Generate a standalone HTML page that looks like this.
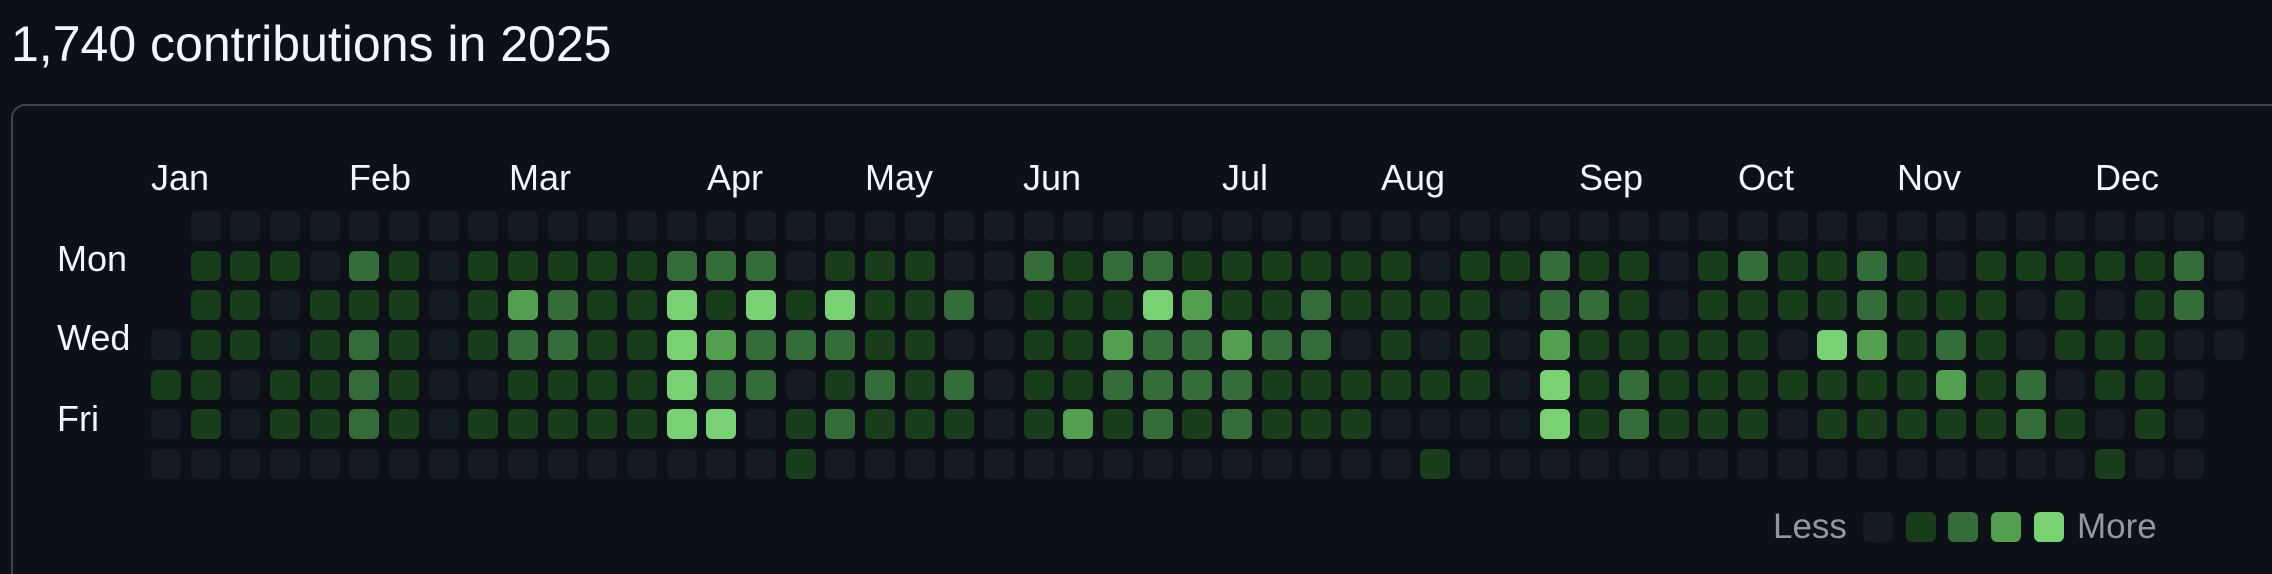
<!DOCTYPE html>
<html><head><meta charset="utf-8"><style>
html,body{margin:0;padding:0;background:#0d1117;width:2272px;height:574px;overflow:hidden;position:relative;font-family:"Liberation Sans",sans-serif}
.t{position:absolute;line-height:1;white-space:nowrap;color:#f0f6fc}
.box{position:absolute;left:11px;top:104px;width:2261px;height:470px;border:2px solid #3d444d;border-right:none;border-bottom:none;border-radius:14px 0 0 0;box-sizing:border-box}
.c{position:absolute;width:30px;height:30px;border-radius:6px}
.l0{background:#151b23}.l1{background:#173d1b}.l2{background:#346c39}.l3{background:#519f4f}.l4{background:#78d272}
</style></head><body>
<div class="t" style="left:11px;top:19px;font-size:50px">1,740 contributions in 2025</div>
<div class="box"></div>
<div class="t" style="left:151px;top:160px;font-size:36px">Jan</div>
<div class="t" style="left:349px;top:160px;font-size:36px">Feb</div>
<div class="t" style="left:509px;top:160px;font-size:36px">Mar</div>
<div class="t" style="left:707px;top:160px;font-size:36px">Apr</div>
<div class="t" style="left:865px;top:160px;font-size:36px">May</div>
<div class="t" style="left:1023px;top:160px;font-size:36px">Jun</div>
<div class="t" style="left:1222px;top:160px;font-size:36px">Jul</div>
<div class="t" style="left:1381px;top:160px;font-size:36px">Aug</div>
<div class="t" style="left:1579px;top:160px;font-size:36px">Sep</div>
<div class="t" style="left:1738px;top:160px;font-size:36px">Oct</div>
<div class="t" style="left:1897px;top:160px;font-size:36px">Nov</div>
<div class="t" style="left:2095px;top:160px;font-size:36px">Dec</div>
<div class="t" style="left:57px;top:241px;font-size:36px">Mon</div>
<div class="t" style="left:57px;top:320px;font-size:36px">Wed</div>
<div class="t" style="left:57px;top:401px;font-size:36px">Fri</div>
<div id="g"></div>
<div class="t" style="left:1773px;top:509px;font-size:35px;color:#9198a1">Less</div>
<div class="c l0" style="left:1863px;top:512px"></div>
<div class="c l1" style="left:1906px;top:512px"></div>
<div class="c l2" style="left:1948px;top:512px"></div>
<div class="c l3" style="left:1991px;top:512px"></div>
<div class="c l4" style="left:2034px;top:512px"></div>
<div class="t" style="left:2077px;top:509px;font-size:35px;color:#9198a1">More</div>
<script>
var rows=[
"-0000000000000000000000000000000000000000000000000000",
"-111021011111222"+"011100212211111101"+"1211012112101111120",
"-110111013211414"+"141120111431121111"+"0221011112111010120",
"0110121012211432"+"221100113223220101"+"0311111043121011100",
"1101121001111422"+"012120112222111111"+"041211111113120110-",
"0101121011111440"+"121110131212111000"+"041211101111121010-",
"0000000000000000"+"100000000000000010"+"000000000000000100-"
];
var h="";
for(var r=0;r<7;r++){var s=rows[r];for(var c=0;c<53&&c<s.length;c++){var ch=s[c];if(ch==="-")continue;
h+='<div class="c l'+ch+'" style="left:'+(151+c*39.67).toFixed(1)+'px;top:'+(211+r*39.67).toFixed(1)+'px"></div>';}}
document.getElementById("g").innerHTML=h;
</script>
</body></html>
